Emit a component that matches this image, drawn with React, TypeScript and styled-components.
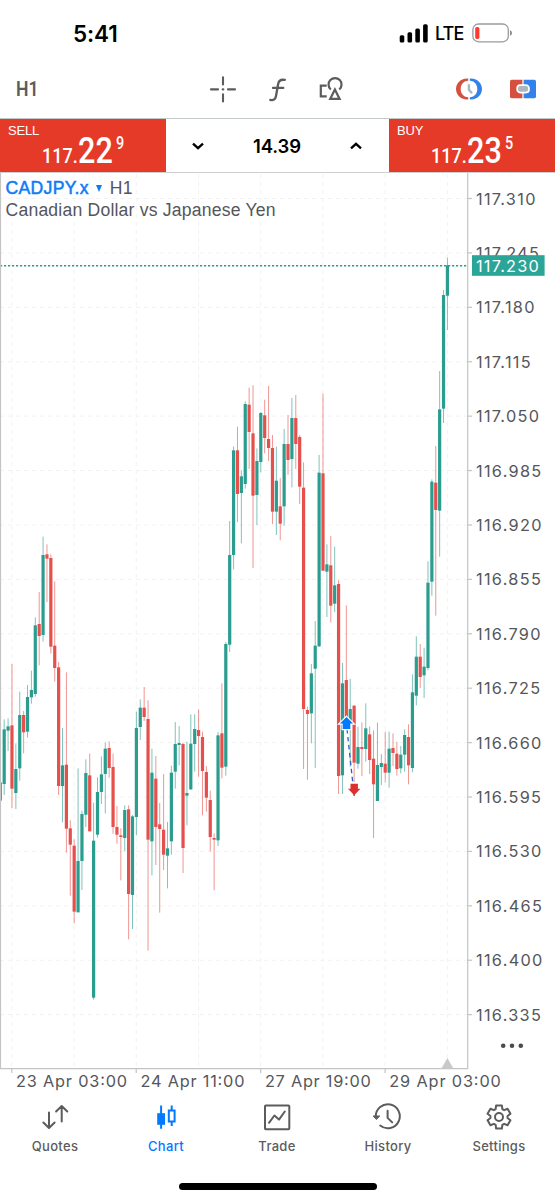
import React from "react";
import styled, { createGlobalStyle } from "styled-components";

const INK = "#5c5c5c";
const BLUE = "#007aff";
const UP = "#2a9d8f";
const DOWN = "#e5504d";

const GlobalStyle = createGlobalStyle`
  * { box-sizing: border-box; }
  body { margin: 0; background: #fff; }
`;

const Screen = styled.main`
  display: flex;
  flex-direction: column;
  width: 555px;
  height: 1200px;
  overflow: hidden;
  background: #fff;
  color: ${INK};
  font-family: Inter, "Liberation Sans", sans-serif;
`;

const StatusBar = styled.header`
  display: flex;
  align-items: center;
  justify-content: space-between;
  height: 60px;
  padding: 6px 42px 0 73px;
  color: #000;
`;

const Clock = styled.time`
  font-size: 22.5px;
  font-weight: 600;
  letter-spacing: -0.1px;
`;

const StatusRight = styled.div`
  display: flex;
  align-items: center;
`;

const Carrier = styled.span`
  width: 28px;
  margin: 1px 0 0 6px;
  font-size: 18px;
  font-weight: 500;
  letter-spacing: -0.9px;
`;

const BatteryIcon = styled.svg`
  margin-left: 9px;
`;

const Toolbar = styled.nav`
  display: flex;
  align-items: center;
  height: 59px;
  border-bottom: 1px solid #c3c9c7;
`;

const Timeframe = styled.span`
  width: 191px;
  padding-left: 17px;
  font: 600 21px Roboto, sans-serif;
  transform: scaleX(0.84);
  transform-origin: 11px 50%;
`;

const ToolGroup = styled.div<{ $gap: number; $left: number }>`
  display: flex;
  align-items: center;
  gap: ${(p) => p.$gap}px;
  margin-left: ${(p) => p.$left}px;
`;

const TradePanel = styled.section`
  display: flex;
  height: 54px;
  border-bottom: 1px solid #cfcfcf;
`;

const Quote = styled.button`
  display: flex;
  flex-direction: column;
  width: 166px;
  height: 53px;
  padding: 4px 0 0 8px;
  border: 0;
  background: #e63a29;
  color: #fff;
  text-align: left;
`;

const Side = styled.span`
  font: 400 13px/16px "Liberation Sans", sans-serif;
  letter-spacing: -0.2px;
`;

const Price = styled.span`
  display: flex;
  align-items: flex-start;
  height: 33px;
  margin-top: -5px;
  padding-left: 34px;
  font-family: Roboto, sans-serif;
`;

const PricePart = styled.span<{ $size: number; $width: number; $top: number; $scale: number; $weight: number }>`
  width: ${(p) => p.$width}px;
  margin-top: ${(p) => p.$top}px;
  font-size: ${(p) => p.$size}px;
  line-height: 1;
  font-weight: ${(p) => p.$weight};
  white-space: nowrap;
  transform: scaleX(${(p) => p.$scale});
  transform-origin: left;
`;

const Stepper = styled.div`
  display: flex;
  flex: 1;
  align-items: center;
  justify-content: space-between;
  padding: 0 25px 0 24px;
  color: #000;
`;

const Volume = styled.span`
  padding-top: 1px;
  font-size: 18.5px;
  font-weight: 600;
  letter-spacing: -0.1px;
`;

const ChartPanel = styled.section`
  position: relative;
  height: 921px;
`;

const ChartSvg = styled.svg`
  display: block;
  font-family: Inter, "Liberation Sans", sans-serif;
`;

const ChartCaption = styled.div`
  position: absolute;
  top: 4px;
  left: 5.5px;
  font: 400 17.6px/22px "Liberation Sans", sans-serif;
  letter-spacing: 0.2px;
  color: #55565c;
`;

const CaptionRow = styled.div`
  display: flex;
  align-items: center;
  white-space: nowrap;
`;

const Symbol = styled.span`
  color: #0d7cf5;
  letter-spacing: 0.3px;
  -webkit-text-stroke: 0.5px #0d7cf5;
`;

const Caret = styled.i`
  margin: 1px 7.5px 0 7.5px;
  border: 3.9px solid transparent;
  border-top: 7.5px solid #0d7cf5;
  border-bottom: 0;
`;

const TabBar = styled.nav`
  display: grid;
  grid-template-columns: repeat(5, 111px);
  height: 66px;
`;

const Tab = styled.a<{ $active?: boolean }>`
  display: flex;
  flex-direction: column;
  align-items: center;
  gap: 5px;
  padding: 8px 1px 0 0;
  color: ${(p) => (p.$active ? BLUE : INK)};
  font-size: 13px;
  line-height: 18px;
  font-weight: 500;
  letter-spacing: 0.3px;
`;

const HomeIndicator = styled.div`
  width: 198px;
  height: 6.6px;
  margin: 23px 0 0 178.7px;
  border-radius: 4px;
  background: #000;
`;

/* Candles: [rising, high, body top, body bottom, low], in thirds of a pixel below the block's origin. */
type Candle = [0 | 1, number, number, number, number];
const BLOCKS: { origin: number; candles: Candle[] }[] = [
  {
    origin: 530,
    candles: [
      [0, 757, 757, 812, 812],
      [1, 568, 598, 762, 795], [1, 565, 589, 602, 663], [0, 402, 586, 776, 834], [1, 640, 717, 789, 837],
      [1, 485, 555, 715, 752], [0, 543, 555, 607, 670], [1, 465, 501, 605, 623], [1, 422, 480, 502, 521],
      [1, 262, 286, 492, 500], [0, 186, 282, 318, 406], [1, 20, 75, 315, 335], [0, 43, 73, 86, 216],
      [0, 73, 84, 350, 371], [0, 154, 347, 414, 455], [0, 396, 412, 768, 795], [1, 594, 706, 768, 877],
      [0, 427, 704, 896, 968], [0, 871, 895, 944, 1097], [0, 928, 947, 1145, 1180], [1, 715, 993, 1147, 1147],
      [1, 842, 852, 993, 1080], [1, 688, 729, 854, 891], [0, 671, 736, 904, 904], [1, 818, 932, 1403, 1409],
      [1, 742, 786, 914, 923], [1, 679, 733, 786, 822], [1, 638, 656, 732, 850], [0, 634, 654, 714, 743],
      [0, 671, 711, 891, 911], [0, 828, 891, 914, 941],
    ],
  },
  {
    origin: 640,
    candles: [
      [0, 565, 586, 591, 721], [1, 496, 510, 594, 634], [0, 496, 508, 762, 898], [1, 525, 529, 765, 867],
      [1, 215, 264, 531, 586], [1, 178, 203, 261, 300], [0, 141, 203, 231, 243], [0, 181, 237, 599, 932],
      [1, 326, 398, 604, 706], [0, 348, 416, 561, 675], [0, 489, 553, 567, 818], [0, 402, 569, 644, 690],
      [1, 546, 625, 647, 745], [1, 377, 398, 604, 644], [1, 246, 312, 395, 446], [1, 258, 309, 315, 376],
      [0, 308, 312, 624, 699], [1, 305, 459, 467, 556], [1, 223, 311, 448, 450], [1, 223, 267, 312, 395],
      [0, 208, 270, 288, 410], [0, 275, 291, 393, 526], [0, 378, 396, 473, 515], [0, 452, 480, 591, 634],
      [0, 580, 594, 599, 751], [1, 276, 286, 601, 618],
    ],
  },
  {
    origin: 370,
    candles: [
      [0, 940, 1090, 1193, 1225], [1, 816, 822, 1190, 1217], [1, 453, 555, 824, 846], [1, 229, 241, 555, 598],
      [0, 170, 241, 372, 456], [1, 302, 319, 369, 520], [1, 94, 102, 342, 356], [0, 53, 104, 186, 297],
      [0, 46, 190, 377, 594], [1, 235, 273, 375, 465], [1, 126, 129, 276, 307], [0, 89, 136, 204, 250],
      [0, 48, 207, 234, 273], [0, 195, 234, 425, 462], [1, 230, 332, 425, 495], [0, 324, 409, 461, 511],
      [1, 177, 222, 409, 467], [0, 135, 222, 270, 314], [1, 84, 144, 267, 352], [0, 75, 144, 222, 297],
      [0, 195, 201, 350, 402], [0, 277, 353, 1017, 1197], [0, 1010, 1020, 1032, 1229], [1, 882, 910, 1030, 1120],
      [1, 753, 827, 896, 1194], [1, 255, 308, 829, 831], [0, 71, 310, 602, 603], [1, 523, 583, 605, 741],
      [0, 498, 586, 707, 757],
    ],
  },
  {
    origin: 380,
    candles: [
      [1, 500, 616, 671, 696], [0, 601, 612, 1188, 1242], [1, 849, 910, 1186, 1242], [0, 676, 900, 1030, 1030],
      [1, 897, 987, 1025, 1160], [0, 976, 977, 1148, 1206], [1, 1040, 1101, 1151, 1166], [0, 1027, 1101, 1107, 1188],
      [1, 970, 1045, 1107, 1145], [0, 1039, 1063, 1140, 1182], [0, 1051, 1136, 1213, 1374],
    ],
  },
  {
    origin: 540,
    candles: [
      [1, 548, 675, 783, 783], [1, 642, 669, 681, 735], [0, 575, 671, 698, 727], [1, 575, 626, 698, 743],
      [0, 580, 624, 639, 678], [0, 605, 641, 687, 707], [1, 618, 644, 685, 700], [1, 568, 585, 644, 695],
      [0, 553, 591, 676, 733], [1, 403, 457, 684, 697], [1, 289, 350, 467, 496], [0, 312, 350, 411, 444],
      [1, 323, 380, 406, 474], [1, 64, 128, 384, 391],
    ],
  },
  {
    origin: 240,
    candles: [
      [1, 718, 725, 1025, 1067], [0, 618, 728, 810, 1127], [1, 393, 508, 812, 950], [1, 150, 165, 506, 549],
      [1, 53, 76, 167, 270],
    ],
  },
];

const CANDLES = BLOCKS.flatMap(({ origin, candles }) =>
  candles.map(([rising, ...ys]) => ({ rising, ys: ys.map((y) => origin + y / 3) })),
);

const PRICES = Array.from({ length: 16 }, (_, i) => (117.31 - i * 0.065).toFixed(3));
const TIMES = ["23 Apr 03:00", "24 Apr 11:00", "27 Apr 19:00", "29 Apr 03:00"];
const TIME_WIDTHS = [111, 104, 106, 111.5];
const priceY = (i: number) => 198.5 + i * 54.41;
const gridX = (i: number) => 11.8 + i * 62.22;

function PriceChart() {
  return (
    <ChartSvg width="555" height="921" viewBox="0 173 555 921">
      <g stroke="#f2f2f2" strokeWidth="1" strokeDasharray="4 4">
        {PRICES.map((p, i) => <line key={p} x1="0" x2="467" y1={priceY(i)} y2={priceY(i)} />)}
        {Array.from({ length: 8 }, (_, i) => (
          <line key={i} x1={gridX(i)} x2={gridX(i)} y1="174" y2="1068" />
        ))}
      </g>
      <line x1="0" x2="467" y1="265.8" y2="265.8" stroke={UP} strokeWidth="1.5" strokeDasharray="2.2 1.8" />
      {CANDLES.map(({ rising, ys: [high, top, bottom, low] }, i) => {
        const x = 0.3 + i * 3.888;
        return (
          <g key={i} fill={rising ? UP : DOWN}>
            <rect x={x - 0.5} y={high} width="1" height={low - high} opacity="0.6" />
            <rect x={x - 1.6} y={top} width="3.2" height={bottom - top} />
          </g>
        );
      })}
      <line x1="347" y1="729" x2="354.2" y2="796" stroke="#2860c8" strokeWidth="1.3" strokeDasharray="4.5 3.5" />
      <path d="M346.5 717l6.6 6.6h-2.8v5.4h-7.6v-5.4h-2.8z" fill={BLUE} stroke="#fff" strokeWidth="2.4" paintOrder="stroke" />
      <path d="M354.2 795.2l-6.2-6.4h2.5v-5h7.4v5h2.5z" fill="#dc3030" />
      <g stroke="#c4c4c4" strokeWidth="1.2" fill="none">
        <path d="M.5 173V1068.5" />
        <path d="M467.7 173V1068.6H0" />
        {PRICES.map((p, i) => <line key={p} x1="468" x2="472" y1={priceY(i)} y2={priceY(i)} />)}
        {TIMES.map((t, i) => <line key={t} x1={gridX(i * 2)} x2={gridX(i * 2)} y1="1069" y2="1073" />)}
      </g>
      <path d="M447.4 1058l6 10.4h-12z" fill="#c9c9c9" />
      <g fill="#55565c" fontSize="16.3">
        {PRICES.map((p, i) => (
          <text key={p} x="476" y={priceY(i) + 6} letterSpacing="1.3">{p}</text>
        ))}
        {TIMES.map((t, i) => (
          <text key={t} x={gridX(i * 2) + 4.2} y="1087.2" textLength={TIME_WIDTHS[i]}>{t}</text>
        ))}
      </g>
      <rect x="472" y="255.2" width="72.6" height="20.6" fill="#2aa597" />
      <text x="476" y="271.7" fontSize="16.3" letterSpacing="1.25" fill="#fff">117.230</text>
      <g fill="#4a4b50">
        {[503.2, 512, 520.8].map((x) => <circle key={x} cx={x} cy="1045.7" r="2.3" />)}
      </g>
    </ChartSvg>
  );
}

function Signal() {
  return (
    <svg width="30" height="19" viewBox="0 0 30 19">
      {[7.3, 10.3, 14, 18.3].map((h, i) => (
        <rect key={h} x={i * 7.8 + 0.7} y={18.6 - h} width="4.6" height={h} rx="1.5" />
      ))}
    </svg>
  );
}

function Battery() {
  return (
    <BatteryIcon width="41" height="20" viewBox="0 0 41 20">
      <rect x=".9" y="1" width="35.4" height="17.8" rx="5.6" fill="none" stroke="#9a9a9a" strokeWidth="1.3" />
      <rect x="3.2" y="3.9" width="4.2" height="12" rx="1.6" fill="#ff3b30" />
      <path d="M38 7.2c2.6.7 2.6 4.8 0 5.5z" fill="#8c8c8c" />
    </BatteryIcon>
  );
}

const stroke = { fill: "none", stroke: "currentColor", strokeLinecap: "round", strokeLinejoin: "round" } as const;

function Crosshair() {
  return (
    <svg width="28" height="28" viewBox="-14 -14 28 28" {...stroke} strokeWidth="2.1">
      <path d="M-12 .4H-5M5 .4H12M0-11.6V-4.6M0 5.4V12.4M-.3 .4h.6" />
    </svg>
  );
}

function FunctionIcon() {
  return (
    <svg width="18" height="26" viewBox="0 0 18 26" {...stroke} strokeWidth="2.3">
      <path d="M1.3 23.9C4.8 24.7 6.4 23.2 7 20L9.2 7.8C9.8 4.7 11.8 3.2 15.8 3.9M4 11.9H14.3" />
    </svg>
  );
}

function ShapesIcon() {
  return (
    <svg width="24" height="26" viewBox="0 0 24 26" {...stroke} strokeWidth="2.2" strokeLinecap="butt" strokeLinejoin="miter">
      <path d="M11.8 13.5A6.5 6.5 0 1 1 20.3 13.5M7.7 9.6H1.8V20.4H7.7M15.9 13.4L11.2 22.9H20.6Z" />
    </svg>
  );
}

function ClockToggle() {
  return (
    <svg width="28" height="24" viewBox="-14 -12 28 24">
      <path d="M-.8-10.5C-9-11-13-5-13 0S-9 11-.8 10.5V8.2C-6 8-8.3 4-8.3 0S-6-8-.8-8.2Z" fill="#d5503f" />
      <path d="M.8-10.5C9-11 13-5 13 0S9 11 .8 10.5V8.2C6 8 8.3 4 8.3 0S6-8 .8-8.2Z" fill="#3382ec" />
      <path d="M-.1-4.8V.8L3 4.2" fill="none" stroke="#abb7bf" strokeWidth="2.4" />
    </svg>
  );
}

function OneClickToggle() {
  return (
    <svg width="28" height="20" viewBox="-14 -10 28 20">
      <path d="M-.6-9.2H-11.4a1.6 1.6 0 0 0-1.6 1.6V7.6a1.6 1.6 0 0 0 1.6 1.6H-.6Z" fill="#d5503f" />
      <path d="M.6-9.2H11.4a1.6 1.6 0 0 1 1.6 1.6V7.6a1.6 1.6 0 0 1-1.6 1.6H.6Z" fill="#3382ec" />
      <rect x="-5.8" y="-3.8" width="11.8" height="7.4" rx="3" fill="#abb7bf" stroke="#fff" strokeWidth="1.7" />
    </svg>
  );
}

function Chevron({ up }: { up?: boolean }) {
  return (
    <svg width="16" height="12" viewBox="0 0 16 12" {...stroke} strokeWidth="2.4" strokeLinecap="butt" strokeLinejoin="miter">
      <path d={up ? "M3 8.3L8 3.8L13 8.3" : "M3 3.7L8 8.2L13 3.7"} />
    </svg>
  );
}

/* Closed outline of a six-toothed wheel, first tooth pointing up. */
const GEAR = Array.from({ length: 6 }, (_, k) =>
  [[-23, 8.6], [-14, 11.9], [14, 11.9], [23, 8.6]].map(([a, r]) => {
    const t = ((k * 60 + a - 90) * Math.PI) / 180;
    return `${(r * Math.cos(t)).toFixed(2)} ${(r * Math.sin(t)).toFixed(2)}`;
  }),
).flat().join("L");

const TAB_ICONS: Record<string, React.ReactNode> = {
  Quotes: <path d="M-6-4.5V10.8M-11.6 5.5L-6 11L-.4 5.5M6.7 4.6V-10.5M1.1-5.5L6.7-11L12.3-5.5" />,
  Chart: (
    <g strokeLinecap="butt" strokeLinejoin="miter">
      <rect x="-8.8" y="-3.8" width="7.8" height="11.6" fill="currentColor" stroke="none" />
      <path d="M-4.9-11.6V11.8M5.7-11.6V-7.5M5.7 5.3V9M2.8-6.6H8.6V4.6H2.8Z" />
    </g>
  ),
  Trade: <path d="M-11.2-11.6H11.5a.8.8 0 0 1 .8.8V11.4a.8.8 0 0 1-.8.8H-11.2a.8.8 0 0 1-.8-.8V-10.8a.8.8 0 0 1 .8-.8ZM-8 5.8L-2.6-1.5L2 2.6L7.8-5.5" />,
  History: (
    <>
      <path d="M-12.2-.5A12 12 0 1 1-7.8 8.6M-.4-6.2V.9L4.2 5.4" />
      <path d="M-14.5-1H-8.2L-11.4 2.2Z" fill="currentColor" strokeWidth="1" />
    </>
  ),
  Settings: <><path d={`M${GEAR}Z`} /><circle r="4" /></>,
};

export default function App() {
  return (
    <Screen>
      <GlobalStyle />
      <StatusBar>
        <Clock>5:41</Clock>
        <StatusRight>
          <Signal />
          <Carrier>LTE</Carrier>
          <Battery />
        </StatusRight>
      </StatusBar>
      <Toolbar>
        <Timeframe>H1</Timeframe>
        <ToolGroup $gap={32} $left={18}>
          <Crosshair />
          <FunctionIcon />
          <ShapesIcon />
        </ToolGroup>
        <ToolGroup $gap={25.5} $left={112.3}>
          <ClockToggle />
          <OneClickToggle />
        </ToolGroup>
      </Toolbar>
      <TradePanel>
        <Quote>
          <Side>SELL</Side>
          <Price>
            <PricePart $size={20} $width={36} $top={11.5} $scale={0.9} $weight={500}>117.</PricePart>
            <PricePart $size={36} $width={38} $top={-1.5} $scale={0.85} $weight={500}>22</PricePart>
            <PricePart $size={18} $width={12} $top={-0.5} $scale={0.8} $weight={500}>9</PricePart>
          </Price>
        </Quote>
        <Stepper>
          <Chevron />
          <Volume>14.39</Volume>
          <Chevron up />
        </Stepper>
        <Quote>
          <Side>BUY</Side>
          <Price>
            <PricePart $size={20} $width={36} $top={11.5} $scale={0.9} $weight={500}>117.</PricePart>
            <PricePart $size={36} $width={38} $top={-1.5} $scale={0.85} $weight={500}>23</PricePart>
            <PricePart $size={18} $width={12} $top={-0.5} $scale={0.8} $weight={500}>5</PricePart>
          </Price>
        </Quote>
      </TradePanel>
      <ChartPanel>
        <PriceChart />
        <ChartCaption>
          <CaptionRow>
            <Symbol>CADJPY.x</Symbol>
            <Caret />
            <span>H1</span>
          </CaptionRow>
          <CaptionRow>Canadian Dollar vs Japanese Yen</CaptionRow>
        </ChartCaption>
      </ChartPanel>
      <TabBar>
        {Object.entries(TAB_ICONS).map(([label, icon]) => (
          <Tab key={label} $active={label === "Chart"}>
            <svg width="30" height="30" viewBox="-15 -15 30 30" {...stroke} strokeWidth="2">{icon}</svg>
            {label}
          </Tab>
        ))}
      </TabBar>
      <HomeIndicator />
    </Screen>
  );
}
